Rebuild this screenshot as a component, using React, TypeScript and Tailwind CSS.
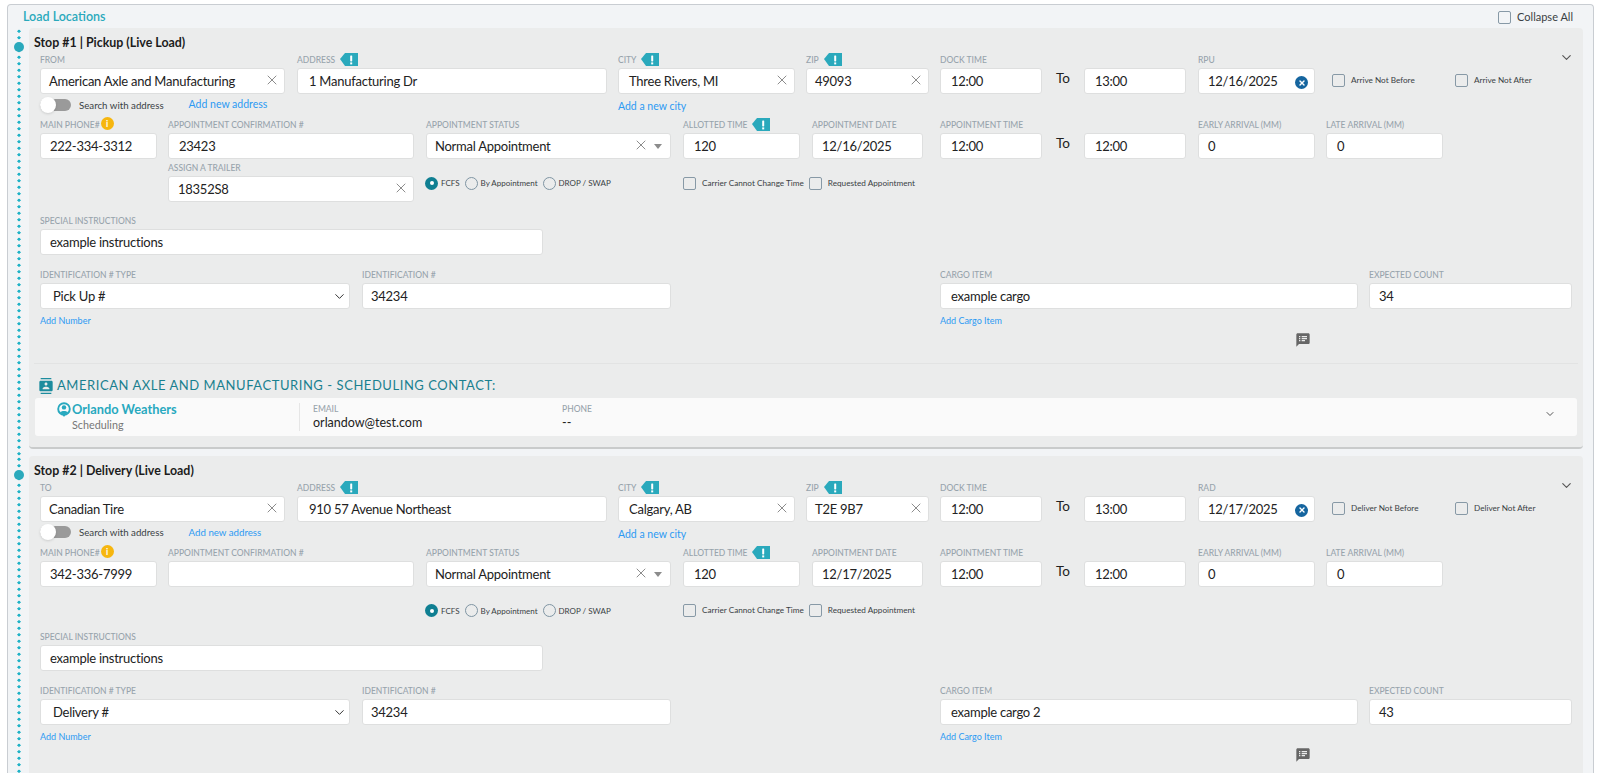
import { ChevronDown, X } from "lucide-react"
import { MdContacts, MdSpeakerNotes } from "react-icons/md"

interface StopData {
  title: string
  fromLabel: string
  from: string
  address: string
  city: string
  zip: string
  dateLabel: string
  notBefore: string
  notAfter: string
  phone: string
  confirmation: string
  date: string
  trailer?: string
  idType: string
  cargo: string
  count: string
}

const stops: StopData[] = [
  {
    title: "Stop #1 | Pickup (Live Load)",
    fromLabel: "FROM",
    from: "American Axle and Manufacturing",
    address: "1 Manufacturing Dr",
    city: "Three Rivers, MI",
    zip: "49093",
    dateLabel: "RPU",
    notBefore: "Arrive Not Before",
    notAfter: "Arrive Not After",
    phone: "222-334-3312",
    confirmation: "23423",
    date: "12/16/2025",
    trailer: "18352S8",
    idType: "Pick Up #",
    cargo: "example cargo",
    count: "34",
  },
  {
    title: "Stop #2 | Delivery (Live Load)",
    fromLabel: "TO",
    from: "Canadian Tire",
    address: "910 57 Avenue Northeast",
    city: "Calgary, AB",
    zip: "T2E 9B7",
    dateLabel: "RAD",
    notBefore: "Deliver Not Before",
    notAfter: "Deliver Not After",
    phone: "342-336-7999",
    confirmation: "",
    date: "12/17/2025",
    idType: "Delivery #",
    cargo: "example cargo 2",
    count: "43",
  },
]

function Flag() {
  return (
    <svg width="18" height="14" viewBox="0 0 18 14" className="shrink-0">
      <path d="M0 7 L5 1 H18 V14 H5 Z" fill="#2aa9bc" />
      <rect x="10.2" y="3.4" width="2" height="6" rx="0.6" fill="#fff" />
      <rect x="10.2" y="10.4" width="2" height="2" fill="#fff" />
    </svg>
  )
}

function PersonIcon() {
  return (
    <svg viewBox="0 0 14 16" className="absolute left-[22px] top-[4px] h-[16px] w-[14px]">
      <circle cx="7" cy="7" r="5.8" fill="none" stroke="#28a9bf" strokeWidth="1.9" />
      <circle cx="7" cy="5.4" r="2.2" fill="#28a9bf" />
      <path d="M3 10.6 C4 8.6 10 8.6 11 10.6 L8.5 12.5 H5.5 Z" fill="#28a9bf" />
      <path d="M5.6 13 H8.4 L7 15 Z" fill="#28a9bf" />
    </svg>
  )
}

function Label({ text, flag, info }: { text: string; flag?: boolean; info?: boolean }) {
  return (
    <div className="flex h-[15px] items-start gap-[5px] whitespace-nowrap pt-[2px] text-[8.5px] font-medium leading-[11px] text-[#98a4ac]">
      <span>{text}</span>
      {flag && (
        <span className="-mt-[3px]">
          <Flag />
        </span>
      )}
      {info && (
        <span className="-ml-[4px] -mt-[3px] flex h-[13px] w-[13px] items-center justify-center rounded-full bg-[#f6b60f] text-[9px] font-bold text-white">
          i
        </span>
      )}
    </div>
  )
}

function Box({ children, pad = "pl-[9px]" }: { children?: React.ReactNode; pad?: string }) {
  return (
    <div
      className={`relative flex h-[26px] items-center rounded-[3px] border border-[#dedfdf] bg-white pt-[2px] text-[13px] tracking-[-0.25px] text-[#222] ${pad}`}
    >
      {children}
    </div>
  )
}

function Clear() {
  return <X className="absolute right-[4px] top-[3px] h-[16px] w-[16px] text-[#8c8c8c]" strokeWidth={1.5} />
}

function Field({
  label,
  value,
  width,
  flag,
  info,
  clear,
  pad,
}: {
  label: string
  value?: string
  width: string
  flag?: boolean
  info?: boolean
  clear?: boolean
  pad?: string
}) {
  return (
    <div className={`shrink-0 ${width}`}>
      <Label text={label} flag={flag} info={info} />
      <Box pad={pad}>
        <span className="whitespace-nowrap">{value}</span>
        {clear && <Clear />}
      </Box>
    </div>
  )
}

function To() {
  return <div className="w-[42px] shrink-0 pl-[14px] pt-[15px] text-[13.5px] leading-[20px] text-[#222]">To</div>
}

function Check({ label, size = "text-[8.2px]" }: { label: string; size?: string }) {
  return (
    <div className={`flex items-center gap-[6px] whitespace-nowrap text-[#3a3f44] ${size}`}>
      <span className="h-[13px] w-[13px] shrink-0 rounded-[2px] border-[1.5px] border-[#8799a6]" />
      {label}
    </div>
  )
}

function Radio({ label, on }: { label: string; on?: boolean }) {
  return (
    <div className="flex items-center gap-[3px] whitespace-nowrap text-[8px] text-[#3a3f44]">
      {on ? (
        <span className="flex h-[13px] w-[13px] items-center justify-center rounded-full bg-[#0f7f92]">
          <span className="h-[4px] w-[4px] rounded-full bg-white" />
        </span>
      ) : (
        <span className="h-[13px] w-[13px] rounded-full border-[1.5px] border-[#7f95a3]" />
      )}
      {label}
    </div>
  )
}

function Stop({ stop, last }: { stop: StopData; last: boolean }) {
  return (
    <div className="flex">
      {/* timeline gutter */}
      <div className="relative w-[21px] shrink-0">
        <div className="absolute bottom-0 left-[9px] top-0 w-[4px] bg-[radial-gradient(circle,#1fb2c6_1.5px,transparent_1.7px)] bg-[length:4px_6.5px]" />
        <div className="absolute left-[6px] top-[14px] h-[10px] w-[10px] rounded-full bg-[#2aa9bc]" />
      </div>

      <div className={`flex-1 ${last ? "" : "pb-[7px]"}`}>
        <div
          className={`rounded-t-[4px] bg-[#ebecec] ${last ? "pb-[60px]" : "rounded-b-[4px] border-b-2 border-[#c9cbcb]"}`}
        >
          <div className="relative h-[25px] pl-[5px] pt-[7px] text-[12.4px] font-bold leading-[16px] text-[#1c1c1c]">
            {stop.title}
            <ChevronDown className="absolute right-[9px] top-[22px] h-[15px] w-[15px] text-[#555]" strokeWidth={1.8} />
          </div>

          {/* address row */}
          <div className="flex h-[65px] pl-[11px]">
            <div className="w-[245px] shrink-0">
              <Label text={stop.fromLabel} />
              <Box pad="pl-[8px]">
                <span className="whitespace-nowrap">{stop.from}</span>
                <Clear />
              </Box>
              <div className="mt-[3px] flex items-center">
                <div className="relative h-[12px] w-[31px] rounded-full bg-[#9a9a9a]">
                  <div className="absolute -top-[2px] left-0 h-[16px] w-[16px] rounded-full bg-white shadow" />
                </div>
                <span className="ml-[8px] text-[9.7px] text-[#3a3f44]">Search with address</span>
                <span className={`ml-[25px] text-[#2b9af3] ${stop.trailer ? "text-[10.5px]" : "text-[9.7px]"}`}>
                  Add new address
                </span>
              </div>
            </div>
            <Field label="ADDRESS" flag value={stop.address} width="ml-[12px] w-[310px]" pad="pl-[11px]" />
            <div className="ml-[11px] w-[177px] shrink-0">
              <Label text="CITY" flag />
              <Box pad="pl-[10px]">
                {stop.city}
                <Clear />
              </Box>
              <div className="mt-[5px] text-[10.5px] text-[#2b9af3]">Add a new city</div>
            </div>
            <Field label="ZIP" flag clear value={stop.zip} width="ml-[11px] w-[123px]" pad="pl-[8px]" />
            <Field label="DOCK TIME" value="12:00" width="ml-[11px] w-[102px]" pad="pl-[10px]" />
            <To />
            <Field label="" value="13:00" width="w-[102px]" pad="pl-[10px]" />
            <div className="ml-[12px] w-[117px] shrink-0">
              <Label text={stop.dateLabel} />
              <Box>
                {stop.date}
                <span className="absolute right-[6px] top-[7px] flex h-[13px] w-[13px] items-center justify-center rounded-full bg-[#15659f]">
                  <X className="h-[8px] w-[8px] text-white" strokeWidth={4} />
                </span>
              </Box>
            </div>
            <div className="ml-[17px] w-[123px] shrink-0 pt-[21px]">
              <Check label={stop.notBefore} />
            </div>
            <div className="pt-[21px]">
              <Check label={stop.notAfter} />
            </div>
          </div>

          {/* appointment row */}
          <div className="flex h-[43px] pl-[11px]">
            <Field label="MAIN PHONE#" info value={stop.phone} width="w-[117px]" />
            <Field label="APPOINTMENT CONFIRMATION #" value={stop.confirmation} width="ml-[11px] w-[246px]" pad="pl-[10px]" />
            <div className="ml-[12px] w-[245px] shrink-0">
              <Label text="APPOINTMENT STATUS" />
              <Box pad="pl-[8px]">
                Normal Appointment
                <X className="absolute right-[21px] top-[3px] h-[16px] w-[16px] text-[#8c8c8c]" strokeWidth={1.5} />
                <span className="absolute right-[8px] top-[10px] border-x-[4px] border-t-[5px] border-x-transparent border-t-[#8c8c8c]" />
              </Box>
            </div>
            <Field label="ALLOTTED TIME" flag value="120" width="ml-[12px] w-[117px]" pad="pl-[10px]" />
            <Field label="APPOINTMENT DATE" value={stop.date} width="ml-[12px] w-[111px]" />
            <Field label="APPOINTMENT TIME" value="12:00" width="ml-[17px] w-[102px]" pad="pl-[10px]" />
            <To />
            <Field label="" value="12:00" width="w-[102px]" pad="pl-[10px]" />
            <Field label="EARLY ARRIVAL (MM)" value="0" width="ml-[12px] w-[117px]" />
            <Field label="LATE ARRIVAL (MM)" value="0" width="ml-[11px] w-[117px]" pad="pl-[10px]" />
          </div>

          {/* trailer and flags row */}
          <div className={`flex pl-[11px] ${stop.trailer ? "h-[41px]" : "h-[29px]"}`}>
            <div className="ml-[128px] w-[246px] shrink-0">
              {stop.trailer && (
                <>
                  <Label text="ASSIGN A TRAILER" />
                  <Box>
                    {stop.trailer}
                    <Clear />
                  </Box>
                </>
              )}
            </div>
            <div className="ml-[11px] flex h-[14px] w-[258px] shrink-0 translate-y-[15px] items-center gap-[5px]">
              <Radio label="FCFS" on />
              <Radio label="By Appointment" />
              <Radio label="DROP / SWAP" />
            </div>
            <div className="flex h-[14px] translate-y-[15px] items-center gap-[5px]">
              <Check label="Carrier Cannot Change Time" />
              <Check label="Requested Appointment" />
            </div>
          </div>

          <div className="mt-[12px] pl-[11px]">
            <Field label="SPECIAL INSTRUCTIONS" value="example instructions" width="w-[503px]" />
          </div>

          {/* identification and cargo row */}
          <div className="mt-[13px] flex pl-[11px]">
            <div className="w-[310px] shrink-0">
              <Label text="IDENTIFICATION # TYPE" />
              <Box pad="pl-[12px]">
                {stop.idType}
                <ChevronDown className="absolute right-[2px] top-[5px] h-[15px] w-[15px] text-[#333]" strokeWidth={1.6} />
              </Box>
              <div className="mt-[5px] text-[9px] text-[#2b9af3]">Add Number</div>
            </div>
            <Field label="IDENTIFICATION #" value="34234" width="ml-[12px] w-[309px]" pad="pl-[8px]" />
            <div className="ml-[269px] w-[418px] shrink-0">
              <Label text="CARGO ITEM" />
              <Box pad="pl-[10px]">{stop.cargo}</Box>
              <div className="mt-[5px] text-[9px] text-[#2b9af3]">Add Cargo Item</div>
              <div className="flex justify-end pr-[47px] pt-[4px]">
                <MdSpeakerNotes className="h-[16px] w-[16px] text-[#666]" />
              </div>
            </div>
            <Field label="EXPECTED COUNT" value={stop.count} width="ml-[11px] w-[203px]" />
          </div>

          {!last && (
            <>
              <div className="mx-[5px] mt-[15px] border-t border-[#e2e3e3]" />
              <div className="mt-[11px] flex h-[23px] items-center pl-[9px] text-[13px] tracking-[0.55px] text-[#19808f]">
                <MdContacts className="mr-[3px] h-[16px] w-[16px] text-[#1d8c9e]" />
                AMERICAN AXLE AND MANUFACTURING - SCHEDULING CONTACT:
              </div>
              <div className="relative mx-[6px] flex h-[38px] rounded-[3px] bg-[#fafafa]">
                <PersonIcon />
                <div className="w-[264px] shrink-0 pl-[37px]">
                  <div className="pt-[3px] text-[12.8px] font-bold leading-[16px] text-[#28a9bf]">Orlando Weathers</div>
                  <div className="text-[10.8px] leading-[16px] text-[#777]">Scheduling</div>
                </div>
                <div className="my-[5px] w-[263px] shrink-0 border-l border-[#e6e6e6] pl-[13px]">
                  <div className="pt-[1px] text-[8.5px] font-medium leading-[11px] text-[#98a4ac]">EMAIL</div>
                  <div className="text-[12.5px] leading-[16px] text-[#222]">orlandow@test.com</div>
                </div>
                <div className="my-[5px]">
                  <div className="pt-[1px] text-[8.5px] font-medium leading-[11px] text-[#98a4ac]">PHONE</div>
                  <div className="text-[12.5px] leading-[16px] text-[#222]">--</div>
                </div>
                <ChevronDown className="absolute right-[21px] top-[10px] h-[12px] w-[12px] text-[#555]" strokeWidth={2} />
              </div>
              <div className="h-[11px]" />
            </>
          )}
        </div>
      </div>
    </div>
  )
}

export default function App() {
  return (
    <div className="h-[773px] overflow-hidden bg-white pl-[7px] pr-[6px] pt-[4px] font-['Lato',sans-serif]">
      <div className="rounded-t-[4px] border border-b-0 border-[#c9cdd2] bg-[#f2f4f6] pr-[10px]">
        <div className="flex h-[23px] items-center justify-between pl-[15px] pr-[10px] pt-[1px]">
          <span className="text-[12.5px] font-semibold text-[#2aa9bc]">Load Locations</span>
          <Check label="Collapse All" size="text-[11px]" />
        </div>
        {stops.map((stop, index) => (
          <Stop key={stop.title} stop={stop} last={index === stops.length - 1} />
        ))}
      </div>
    </div>
  )
}
